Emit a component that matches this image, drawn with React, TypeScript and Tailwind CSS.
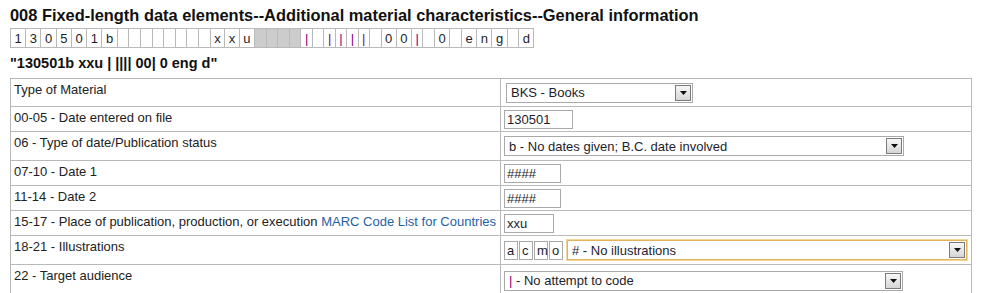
import type { ReactNode } from "react";

const boxes: { c: string; gray?: boolean; pipe?: boolean }[] = [
  { c: "1" }, { c: "3" }, { c: "0" }, { c: "5" }, { c: "0" }, { c: "1" }, { c: "b" },
  { c: "" }, { c: "" }, { c: "" }, { c: "" }, { c: "" }, { c: "" }, { c: "" }, { c: "" },
  { c: "x" }, { c: "x" }, { c: "u" },
  { c: "", gray: true }, { c: "", gray: true }, { c: "", gray: true }, { c: "", gray: true },
  { c: "|", pipe: true }, { c: "" },
  { c: "|", pipe: true }, { c: "|", pipe: true }, { c: "|", pipe: true }, { c: "|", pipe: true },
  { c: "" }, { c: "0" }, { c: "0" }, { c: "|", pipe: true }, { c: "" }, { c: "0" }, { c: "" },
  { c: "e" }, { c: "n" }, { c: "g" }, { c: "" }, { c: "d" },
];

function Arrow() {
  return (
    <span className="flex h-full w-[16px] items-center justify-center border border-[#7b7b7b] bg-gradient-to-b from-[#f7f7f7] to-[#d6d6d6]">
      <svg width="7" height="4" viewBox="0 0 7 4">
        <path d="M0 0H7L3.5 4Z" fill="#111" />
      </svg>
    </span>
  );
}

function Select({ w, children, focus }: { w: string; children: ReactNode; focus?: boolean }) {
  return (
    <div
      className={`${w} flex h-[20px] items-stretch bg-white p-px ${
        focus ? "border border-[#e3b25c] shadow-[0_0_0_1px_#f3d69c]" : "border border-[#a9a9a9]"
      }`}
    >
      <span className="flex flex-1 items-center pl-[3px] leading-none text-[#1d1d2b]">{children}</span>
      <Arrow />
    </div>
  );
}

function Input({ w, value }: { w: string; value: string }) {
  return (
    <div className={`${w} flex h-[19px] items-center border border-[#a9a9a9] bg-white pl-[2px] leading-none text-[#1d1d2b]`}>
      {value}
    </div>
  );
}

function Row({ h, label, children }: { h: string; label: ReactNode; children: ReactNode }) {
  return (
    <tr className={h}>
      <td className="w-[490px] border border-[#b9b9b9] px-[3px] pt-[1px] align-top">{label}</td>
      <td className="border border-[#b9b9b9] px-[3px] align-middle">{children}</td>
    </tr>
  );
}

export default function App() {
  return (
    <div className="bg-white px-[10px] pt-[6px] text-[13px] text-[#222] [font-family:'Liberation_Sans',Arial,sans-serif]">
      <h2 className="text-[16.4px] font-bold leading-[18px] text-[#111]">
        008 Fixed-length data elements--Additional material characteristics--General information
      </h2>

      <div className="mt-[4px] flex h-[20px] w-max border-y border-l border-[#b9b9b9]">
        {boxes.map((b, i) => (
          <span
            key={i}
            className={`flex items-center border-r border-[#b9b9b9] px-[3.5px] leading-none ${
              b.gray ? "bg-[#cccccc]" : "bg-white"
            } ${b.pipe ? "text-[#800080]" : "text-[#1d1d2b]"}`}
          >
            {b.c === "" ? "\u00a0" : b.c}
          </span>
        ))}
      </div>

      <p className="mt-[7px] text-[14.5px] font-bold leading-[16px] text-[#111]">"130501b xxu | |||| 00| 0 eng d"</p>

      <table className="mt-[7px] w-[962px] border-collapse">
        <tbody>
          <Row h="h-[28px]" label="Type of Material">
            <div className="ml-[2px]">
              <Select w="w-[187px]">BKS - Books</Select>
            </div>
          </Row>
          <Row h="h-[25px]" label="00-05 - Date entered on file">
            <Input w="w-[69px]" value="130501" />
          </Row>
          <Row h="h-[29px]" label="06 - Type of date/Publication status">
            <Select w="w-[400px]">b - No dates given; B.C. date involved</Select>
          </Row>
          <Row h="h-[25px]" label="07-10 - Date 1">
            <Input w="w-[57px]" value="####" />
          </Row>
          <Row h="h-[25px]" label="11-14 - Date 2">
            <Input w="w-[57px]" value="####" />
          </Row>
          <Row
            h="h-[25px]"
            label={
              <>
                15-17 - Place of publication, production, or execution{" "}
                <a href="#" className="text-[#1f5fa6]">
                  MARC Code List for Countries
                </a>
              </>
            }
          >
            <Input w="w-[50px]" value="xxu" />
          </Row>
          <Row h="h-[29px]" label="18-21 - Illustrations">
            <div className="flex items-center">
              <div className="flex gap-px">
                {["a", "c", "m", "o"].map((c) => (
                  <Input key={c} w="w-[14px]" value={c} />
                ))}
              </div>
              <div className="ml-[4px]">
                <Select w="w-[400px]" focus>
                  # - No illustrations
                </Select>
              </div>
            </div>
          </Row>
          <Row h="h-[32px]" label="22 - Target audience">
            <Select w="w-[399px]">
              <span className="text-[#800080]">|</span>&nbsp;- No attempt to code
            </Select>
          </Row>
        </tbody>
      </table>
    </div>
  );
}
